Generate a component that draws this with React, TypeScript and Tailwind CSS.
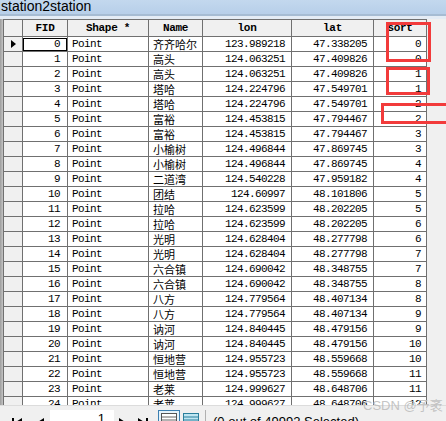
import React from "react";

const rows: [number, string, string, string, number][] = [
  [0, "齐齐哈尔", "123.989218", "47.338205", 0],
  [1, "高头", "124.063251", "47.409826", 0],
  [2, "高头", "124.063251", "47.409826", 1],
  [3, "塔哈", "124.224796", "47.549701", 1],
  [4, "塔哈", "124.224796", "47.549701", 2],
  [5, "富裕", "124.453815", "47.794467", 2],
  [6, "富裕", "124.453815", "47.794467", 3],
  [7, "小榆树", "124.496844", "47.869745", 3],
  [8, "小榆树", "124.496844", "47.869745", 4],
  [9, "二道湾", "124.540228", "47.959182", 4],
  [10, "团结", "124.60997", "48.101806", 5],
  [11, "拉哈", "124.623599", "48.202205", 5],
  [12, "拉哈", "124.623599", "48.202205", 6],
  [13, "光明", "124.628404", "48.277798", 6],
  [14, "光明", "124.628404", "48.277798", 7],
  [15, "六合镇", "124.690042", "48.348755", 7],
  [16, "六合镇", "124.690042", "48.348755", 8],
  [17, "八方", "124.779564", "48.407134", 8],
  [18, "八方", "124.779564", "48.407134", 9],
  [19, "讷河", "124.840445", "48.479156", 9],
  [20, "讷河", "124.840445", "48.479156", 10],
  [21, "恒地营", "124.955723", "48.559668", 10],
  [22, "恒地营", "124.955723", "48.559668", 11],
  [23, "老莱", "124.999627", "48.648706", 11],
  [24, "老莱", "124.999627", "48.648706", 12],
];

const mono = "font-['Liberation_Mono','Noto_Sans_CJK_SC',monospace] text-[11px] tracking-[-0.6px] leading-none";
const cjk = "font-['Noto_Sans_CJK_SC',sans-serif] text-[11px] leading-none";
const line = "border-[#707070]";

function Header() {
  const h = "flex items-center justify-center border-r bg-[#f0f0f0] font-['Liberation_Mono',monospace] text-[11px] font-bold tracking-[-0.3px] text-black " + line;
  return (
    <div className={"flex h-[17px] border-b " + line}>
      <div className={h + " w-[19px]"} />
      <div className={h + " w-[45px]"}>FID</div>
      <div className={h + " w-[81px]"}>Shape *</div>
      <div className={h + " w-[54px]"}>Name</div>
      <div className={h + " w-[89px]"}>lon</div>
      <div className={h + " w-[82px]"}>lat</div>
      <div className={h + " w-[53px]"}>sort</div>
    </div>
  );
}

function Row({ r }: { r: [number, string, string, string, number] }) {
  const [fid, name, lon, lat, sort] = r;
  const c = "flex items-center border-r bg-white text-black " + line;
  return (
    <div className={"flex h-[15px] shrink-0 border-b " + line}>
      <div className={"flex w-[19px] items-center justify-center border-r bg-[#f0f0f0] " + line}>
        {fid === 0 && (
          <svg width="5" height="8" viewBox="0 0 5 8">
            <path d="M0 0 L5 4 L0 8 Z" fill="#000" />
          </svg>
        )}
      </div>
      <div className={c + " w-[45px] justify-end " + mono}>
        {fid === 0 ? (
          <div className="flex h-[13px] w-[44px] items-center justify-end border border-black pr-[6px]">0</div>
        ) : (
          <span className="pr-[7px]">{fid}</span>
        )}
      </div>
      <div className={c + " w-[81px] pl-[4px] " + mono}>Point</div>
      <div className={c + " w-[54px] pl-[4px] " + cjk}>{name}</div>
      <div className={c + " w-[89px] justify-end pr-[6px] " + mono}>{lon}</div>
      <div className={c + " w-[82px] justify-end pr-[6px] " + mono}>{lat}</div>
      <div className={c + " w-[53px] justify-end pr-[5px] " + mono}>{sort}</div>
    </div>
  );
}

function NavGlyph({ d }: { d: string }) {
  return (
    <svg width="10" height="9" viewBox="0 0 10 9">
      <path d={d} fill="#000" />
    </svg>
  );
}

export default function App() {
  return (
    <div className="relative flex h-[421px] w-[446px] flex-col overflow-hidden bg-[#f0f0f0]">
      <div className="h-[14px] shrink-0 bg-gradient-to-b from-[#c3d8ee] to-[#b7cfe9] pl-[1px] font-['Liberation_Sans',Arial,sans-serif] text-[14px] leading-[13px] text-black">
        station2station
      </div>
      <div className="h-[2px] shrink-0 bg-[#a6bcd3]" />
      <div className="h-[3px] shrink-0 bg-[#e4ecf5]" />

      <div className="flex min-h-0 flex-1">
        <div className="w-[3px] shrink-0 bg-gradient-to-r from-[#9d9d9d] to-[#c4c4c4]" />
        <div className={"flex w-[424px] shrink-0 flex-col overflow-hidden border-l border-t " + line}>
          <Header />
          {rows.map((r) => (
            <Row key={r[0]} r={r} />
          ))}
        </div>
        <div className="flex-1 bg-[#f0f0f0]" />
      </div>

      <div className="flex h-[16px] shrink-0 items-start border-t border-[#dcdcdc] bg-[#f0f0f0] pt-[4px]">
        <div className="ml-[12px] mt-[8px]">
          <NavGlyph d="M0 0 H2 V9 H0 Z M10 0 L3 4.5 L10 9 Z" />
        </div>
        <div className="ml-[14px] mt-[8px]">
          <NavGlyph d="M8 0 L1 4.5 L8 9 Z" />
        </div>
        <div className="ml-[4px] flex h-[14px] w-[64px] justify-end bg-white pr-[9px] pt-[2px] font-['Liberation_Sans',Arial,sans-serif] text-[13px] leading-none">
          1
        </div>
        <div className="ml-[4px] mt-[8px]">
          <NavGlyph d="M1 0 L8 4.5 L1 9 Z" />
        </div>
        <div className="ml-[10px] mt-[8px]">
          <NavGlyph d="M0 0 L7 4.5 L0 9 Z M8 0 H10 V9 H8 Z" />
        </div>
        <div className="ml-[10px] flex h-[14px] w-[22px] justify-center border border-[#3c7fb1] bg-[#e5f3fb] pt-[2px]">
          <svg width="16" height="12" viewBox="0 0 16 12">
            <rect x="0.5" y="0.5" width="15" height="11" fill="#fff" stroke="#555" />
            <path d="M1 4 H15 M1 7 H15 M1 10 H15" stroke="#666" />
          </svg>
        </div>
        <div className="ml-[3px] pt-[3px]">
          <svg width="16" height="12" viewBox="0 0 16 12">
            <rect x="0.5" y="0.5" width="15" height="11" fill="#bfe6f2" stroke="#2b7f9c" />
            <path d="M1 4 H15 M1 7 H15 M1 10 H15" stroke="#2b7f9c" />
          </svg>
        </div>
        <div className="ml-[6px] h-[14px] w-px bg-[#b0b0b0]" />
        <div className="ml-[7px] pt-[5px] font-['Liberation_Sans',Arial,sans-serif] text-[13px] leading-none text-black">
          (0 out of 49992 Selected)
        </div>
      </div>

      <div className="absolute left-[386px] top-[22px] h-[40px] w-[45px] border-[3px] border-[#f23b3b]" />
      <div className="absolute left-[386px] top-[67px] h-[28px] w-[44px] border-[3px] border-[#f23b3b]" />
      <div className="absolute left-[381px] top-[103px] h-[21px] w-[70px] border-[3px] border-[#f23b3b]" />

      <div className="absolute left-[363px] top-[399px] font-['Liberation_Sans','Noto_Sans_CJK_SC',sans-serif] text-[13px] leading-none text-[#bdbdbd]/90">
        CSDN @予袤
      </div>
    </div>
  );
}
